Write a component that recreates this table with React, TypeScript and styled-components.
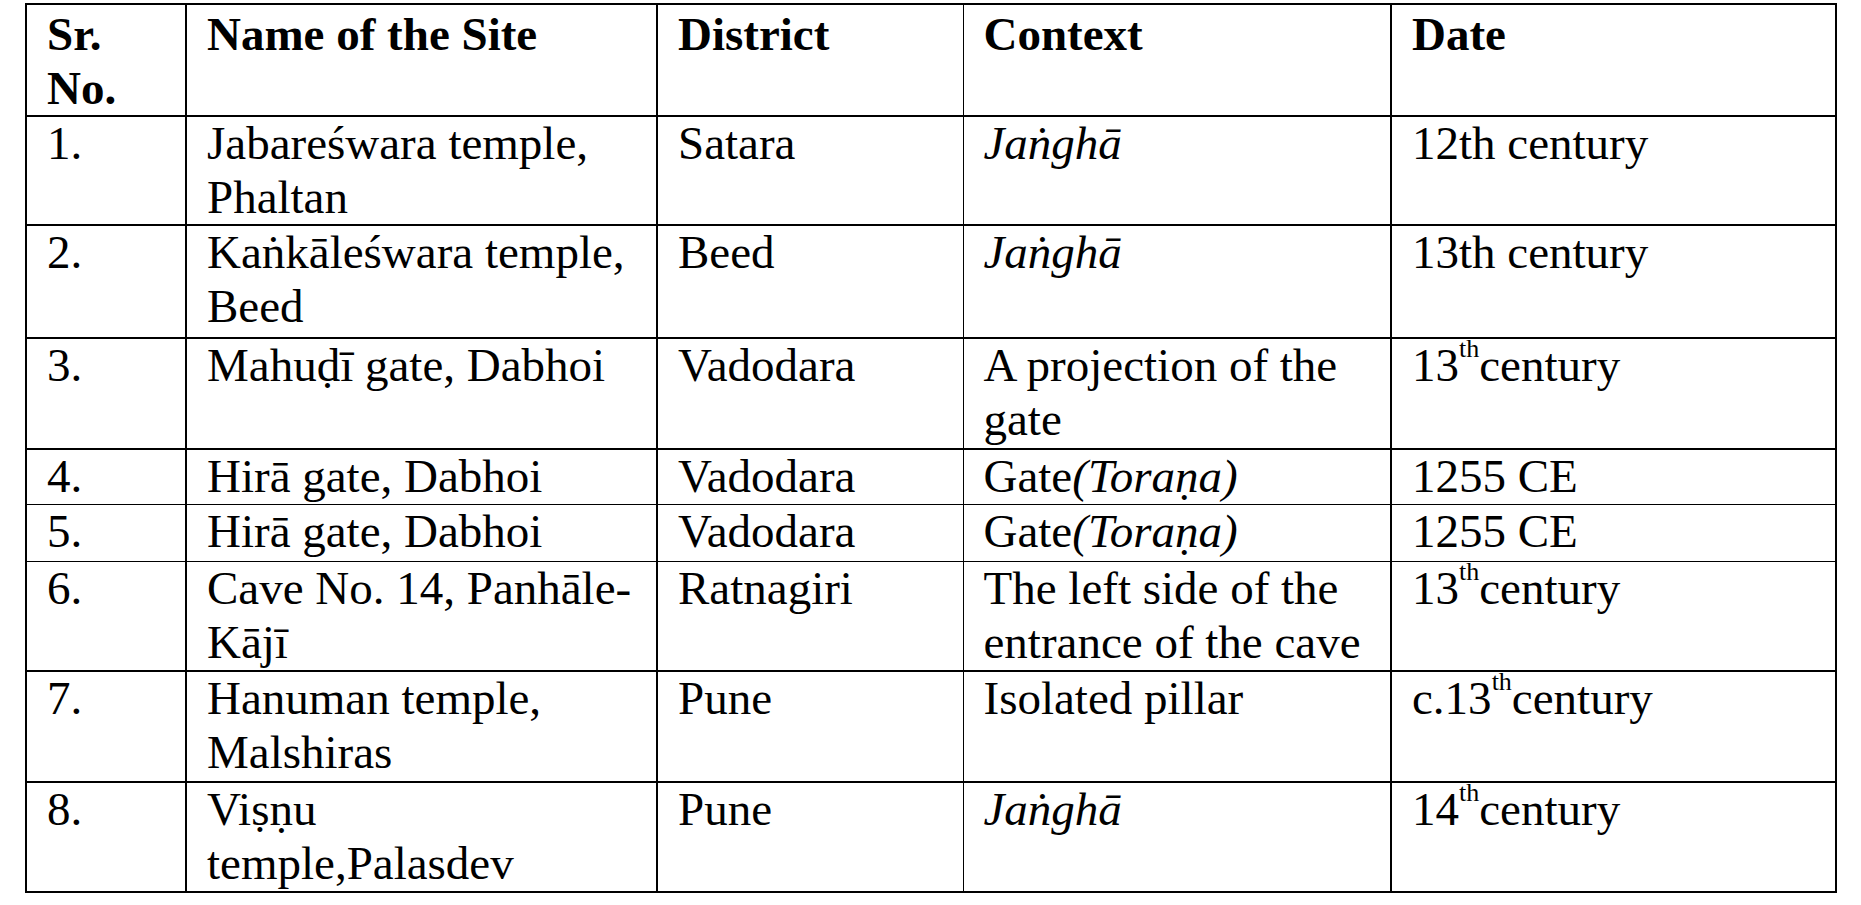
import React from "react";
import styled, { createGlobalStyle } from "styled-components";

const GlobalStyle = createGlobalStyle`
  html, body {
    margin: 0;
    padding: 0;
    background: #ffffff;
  }
  body {
    font-family: "Liberation Serif", "Times New Roman", "DejaVu Serif", serif;
    color: #000000;
  }
`;

const Page = styled.div`
  padding: 3px 0 0 25px;
  background: #ffffff;
  min-height: 905px;
  box-sizing: border-box;
`;

const Table = styled.table`
  border-collapse: collapse;
  table-layout: fixed;
  width: 1810px;
  font-family: "Liberation Serif", "Times New Roman", "DejaVu Serif", serif;
  font-size: 47px;
  line-height: 54px;
  color: #000;
`;

const Col = styled.col<{ $w: number }>`
  width: ${(p) => p.$w}px;
`;

const Row = styled.tr<{ $h: number }>`
  height: ${(p) => p.$h}px;
`;

const Cell = styled.td<{
  $right: number;
  $bottom: number;
  $first: boolean;
  $top: boolean;
  $header: boolean;
}>`
  vertical-align: top;
  white-space: nowrap;
  padding: 0 4px 0 20px;
  border-right: ${(p) => p.$right}px solid #000;
  border-bottom: ${(p) => p.$bottom}px solid #000;
  border-left: ${(p) => (p.$first ? "2px solid #000" : "none")};
  border-top: ${(p) => (p.$top ? "2px solid #000" : "none")};
  font-weight: ${(p) => (p.$header ? 700 : 400)};
`;

const Lines = styled.div<{ $shift: number }>`
  margin-top: ${(p) => p.$shift}px;
`;

const Em = styled.i`
  font-style: italic;
`;

const Sup = styled.span`
  font-size: 26px;
  line-height: 0;
  vertical-align: 24px;
`;

type Content = React.ReactNode;

const colWidths = [160, 471, 306, 428, 445];
const colRight = [2, 2, 1, 2, 2];

type RowData = { h: number; bottom: number; header?: boolean; cells: Content[][] };

const th = (n: string, rest: string) => (
  <>
    {n}
    <Sup>th</Sup>
    {rest}
  </>
);

const rows: RowData[] = [
  {
    h: 111,
    bottom: 2,
    header: true,
    cells: [["Sr.", "No."], ["Name of the Site"], ["District"], ["Context"], ["Date"]],
  },
  {
    h: 109,
    bottom: 2,
    cells: [["1."], ["Jabareśwara temple,", "Phaltan"], ["Satara"], [<Em>Jaṅghā</Em>], ["12th century"]],
  },
  {
    h: 113,
    bottom: 2,
    cells: [["2."], ["Kaṅkāleśwara temple,", "Beed"], ["Beed"], [<Em>Jaṅghā</Em>], ["13th century"]],
  },
  {
    h: 111,
    bottom: 2,
    cells: [["3."], ["Mahuḍī gate, Dabhoi"], ["Vadodara"], ["A projection of the", "gate"], [th("13", "century")]],
  },
  {
    h: 55,
    bottom: 1,
    cells: [["4."], ["Hirā gate, Dabhoi"], ["Vadodara"], [<>Gate<Em>(Toraṇa)</Em></>], ["1255 CE"]],
  },
  {
    h: 57,
    bottom: 1,
    cells: [["5."], ["Hirā gate, Dabhoi"], ["Vadodara"], [<>Gate<Em>(Toraṇa)</Em></>], ["1255 CE"]],
  },
  {
    h: 110,
    bottom: 2,
    cells: [
      ["6."],
      ["Cave No. 14, Panhāle-", "Kājī"],
      ["Ratnagiri"],
      ["The left side of the", "entrance of the cave"],
      [th("13", "century")],
    ],
  },
  {
    h: 111,
    bottom: 2,
    cells: [["7."], ["Hanuman temple,", "Malshiras"], ["Pune"], ["Isolated pillar"], [th("c.13", "century")]],
  },
  {
    h: 110,
    bottom: 2,
    cells: [["8."], ["Viṣṇu", "temple,Palasdev"], ["Pune"], [<Em>Jaṅghā</Em>], [th("14", "century")]],
  },
];

export default function App() {
  return (
    <>
      <GlobalStyle />
      <Page>
        <Table>
          <colgroup>
            {colWidths.map((w, i) => (
              <Col key={i} $w={w} />
            ))}
          </colgroup>
          <tbody>
            {rows.map((r, ri) => (
              <Row key={ri} $h={r.h}>
                {r.cells.map((lines, ci) => (
                  <Cell
                    key={ci}
                    $right={colRight[ci]}
                    $bottom={r.bottom}
                    $first={ci === 0}
                    $top={ri === 0}
                    $header={!!r.header}
                  >
                    <Lines $shift={r.header ? 2 : -1}>
                      {lines.map((line, li) => (
                        <React.Fragment key={li}>
                          {li > 0 && <br />}
                          {line}
                        </React.Fragment>
                      ))}
                    </Lines>
                  </Cell>
                ))}
              </Row>
            ))}
          </tbody>
        </Table>
      </Page>
    </>
  );
}
